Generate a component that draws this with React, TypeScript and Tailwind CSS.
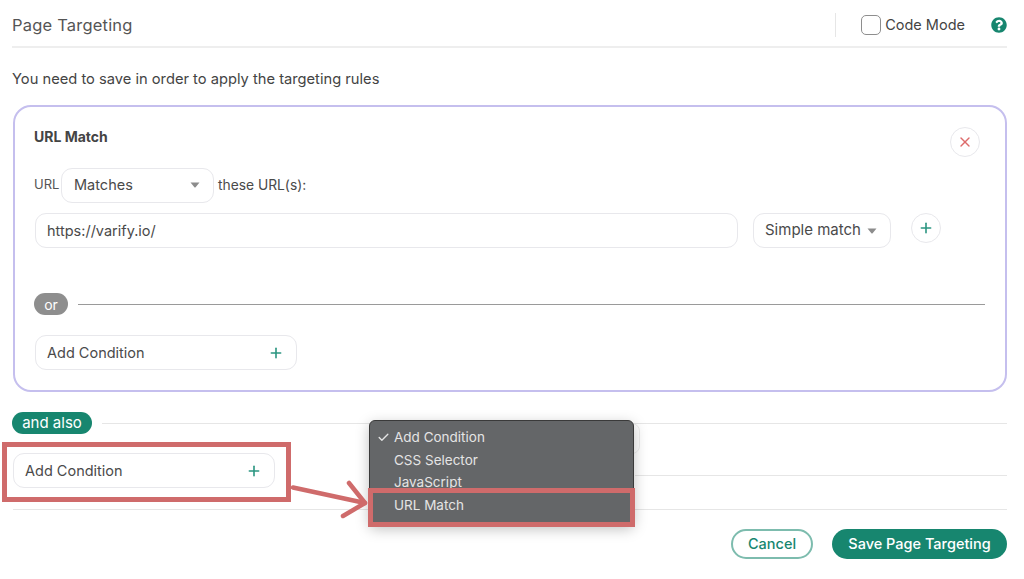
import { Check, Plus, X } from "lucide-react";
import { FaQuestionCircle } from "react-icons/fa";

function Caret({ className }: { className?: string }) {
  return (
    <svg width="10" height="6" viewBox="0 0 10 6" className={className}>
      <path d="M0.5 0.5h9L5.6 5.2a0.8 0.8 0 0 1-1.2 0z" fill="#8c8c8c" />
    </svg>
  );
}

function AddCondition() {
  return (
    <div className="flex h-[35px] w-[262px] items-center justify-between rounded-[11px] border border-[#e8e8ec] bg-white pl-[11px] pr-[12px] text-[14.5px] text-[#4a4a4a]">
      <span>Add Condition</span>
      <Plus size={16} strokeWidth={2.4} className="text-[#2a9580]" />
    </div>
  );
}

export default function App() {
  return (
    <div className="relative h-[579px] w-[1024px] overflow-hidden bg-white pl-[12px] pr-[17px] font-['Inter',sans-serif] text-[#4a4a4a]">
      <header className="flex h-[48px] items-center justify-between border-b-2 border-[#eeeeee] pt-[4px]">
        <h1 className="text-[16.5px] tracking-[0.2px] text-[#555555]">Page Targeting</h1>
        <div className="flex items-center">
          <div className="mr-[25px] h-[24px] w-px bg-[#e6e6e6]" />
          <div className="h-[20px] w-[20px] rounded-[5px] border border-[#8e8e8e]" />
          <span className="ml-[4px] text-[14.5px] text-[#444444]">Code Mode</span>
          <FaQuestionCircle size={16} className="ml-[26px] text-[#17866f]" />
        </div>
      </header>

      <p className="mt-[22px] text-[14.7px] leading-[18px] text-[#444444]">You need to save in order to apply the targeting rules</p>

      <section className="mt-[17px] ml-px h-[287px] rounded-[18px] border-2 border-[#c5bfee] pl-[19px] pr-[20px]">
        <div className="flex h-[60px] items-start justify-between">
          <h2 className="mt-[21px] text-[14px] leading-[18px] font-bold text-[#444444]">URL Match</h2>
          <div className="mt-[20px] mr-[5px] flex h-[30px] w-[30px] items-center justify-center rounded-full border border-[#e8e8ec]">
            <X size={16} strokeWidth={2} className="text-[#dd6b6b]" />
          </div>
        </div>
        <div className="flex h-[36px] items-center text-[14.5px]">
          <span className="w-[24px] text-[13px] text-[#555555]">URL</span>
          <div className="ml-[3px] flex h-[35px] w-[153px] items-center justify-between rounded-[11px] border border-[#e8e8ec] pl-3 pr-[13px]">
            <span>Matches</span>
            <Caret />
          </div>
          <span className="ml-[4px] text-[13.8px]">these URL(s):</span>
        </div>
        <div className="mt-[10px] flex items-start pl-px text-[14.5px]">
          <div className="flex h-[35px] w-[703px] items-center rounded-[11px] border border-[#e8e8ec] pl-[11px]">https://varify.io/</div>
          <div className="ml-[15px] flex h-[35px] w-[138px] items-center justify-between rounded-[11px] border border-[#e8e8ec] pl-[11px] pr-[13px] text-[15px]">
            <span>Simple match</span>
            <Caret />
          </div>
          <div className="ml-[20px] flex h-[30px] w-[30px] items-center justify-center rounded-full border border-[#e8e8ec]">
            <Plus size={16} strokeWidth={2.4} className="text-[#2a9580]" />
          </div>
        </div>
        <div className="mt-[45px] flex items-center">
          <span className="flex h-[22px] w-[34px] items-center justify-center rounded-full bg-[#8e8e8e] text-[14px] text-white">or</span>
          <div className="ml-[10px] h-px flex-1 bg-[#9a9a9a]" />
        </div>
        <div className="mt-[20px] pl-px">
          <AddCondition />
        </div>
      </section>

      <div className="mt-[20px] flex items-center">
        <span className="flex h-[22px] w-[80px] items-center justify-center rounded-full bg-[#17866f] text-[15px] text-white">and also</span>
        <div className="ml-[10px] h-px flex-1 bg-[#e6e6e6]" />
      </div>
      <div className="mt-[19px] flex pl-px">
        <AddCondition />
        <div className="mb-[12px] ml-[360px] h-px flex-1 self-end bg-[#e6e6e6]" />
      </div>
      <div className="mt-[21px] ml-px h-px bg-[#e6e6e6]" />

      <footer className="mt-[19px] flex justify-end gap-[19px]">
        <button className="h-[30px] w-[82px] rounded-full border-2 border-[#7dbcae] text-[14.5px] font-medium text-[#17866f]">Cancel</button>
        <button className="h-[30px] w-[175px] rounded-full bg-[#17866f] text-[14.5px] font-medium text-white">Save Page Targeting</button>
      </footer>

      {/* Native select behind the popup */}
      <div className="absolute left-[600px] top-[423px] h-[31px] w-[40px] rounded-[8px] border border-[#eeeeee]" />

      {/* Native menu popup */}
      <div className="absolute left-[369px] top-[420px] h-[105px] w-[265px] rounded-[6px] border border-[#3a3a3a] bg-[#646668] pt-[5px] text-[13.5px] text-[#e4e4e4] shadow-[0_4px_14px_rgba(0,0,0,0.25)]">
        <div className="relative flex h-[22.5px] items-center pl-[24px]">
          <Check size={13} strokeWidth={2.5} className="absolute left-[7px] top-[5px]" />
          Add Condition
        </div>
        <div className="flex h-[22.5px] items-center pl-[24px]">CSS Selector</div>
        <div className="flex h-[22.5px] items-center pl-[24px]">JavaScript</div>
        <div className="flex h-[22.5px] items-center pl-[24px] pt-px">URL Match</div>
      </div>

      {/* Red annotations */}
      <div className="absolute left-[2px] top-[442px] h-[60px] w-[289px] border-[5px] border-[#cf6b6b]" />
      <div className="absolute left-[368px] top-[488px] h-[39px] w-[267px] border-[5px] border-[#cf6b6b]" />
      <svg className="absolute left-[290px] top-[478px]" width="80" height="42" viewBox="0 0 80 42" fill="none" stroke="#cf6b6b" strokeWidth="4.5" strokeLinecap="round" strokeLinejoin="round">
        <path d="M3 9.5L75 25" />
        <path d="M59 5L75 25L53 38" />
      </svg>
    </div>
  );
}
